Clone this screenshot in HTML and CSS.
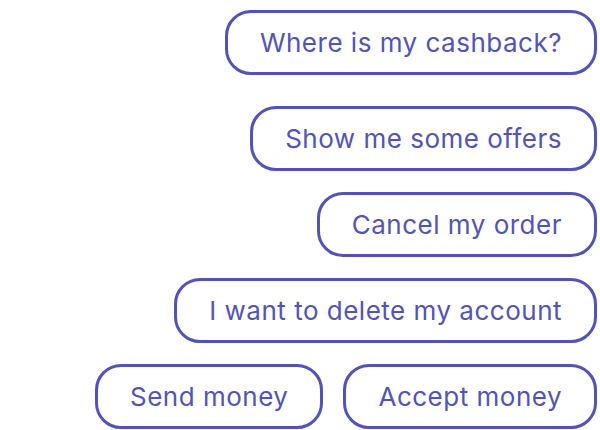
FILE: index.html
```html
<!DOCTYPE html>
<html>
<head>
<meta charset="utf-8">
<link rel="stylesheet" href="styles.css">
</head>
<body>
<div class="chips">
  <button class="chip chip-first">Where is my cashback?</button>
  <button class="chip">Show me some offers</button>
  <button class="chip">Cancel my order</button>
  <button class="chip">I want to delete my account</button>
  <div class="row">
    <button class="chip">Send money</button>
    <button class="chip">Accept money</button>
  </div>
</div>
</body>
</html>
```
FILE: styles.css
```css
html, body {
  margin: 0;
  padding: 0;
  background: #ffffff;
}
body {
  width: 600px;
  height: 430px;
  overflow: hidden;
}
.chips {
  display: flex;
  flex-direction: column;
  align-items: flex-end;
  gap: 21px;
  padding: 10px 3px 0 0;
}
.chip {
  box-sizing: border-box;
  height: 65px;
  padding: 0 32px;
  border: 3px solid #5154b6;
  border-radius: 26px;
  background: #ffffff;
  color: #5154b6;
  font-family: Inter, "Noto Sans", sans-serif;
  font-size: 26px;
  font-weight: 400;
  letter-spacing: 0.5px;
  line-height: 1;
  white-space: nowrap;
  margin: 0;
}
.chip-first {
  margin-bottom: 10px;
}
.row {
  display: flex;
  gap: 20px;
}
```
